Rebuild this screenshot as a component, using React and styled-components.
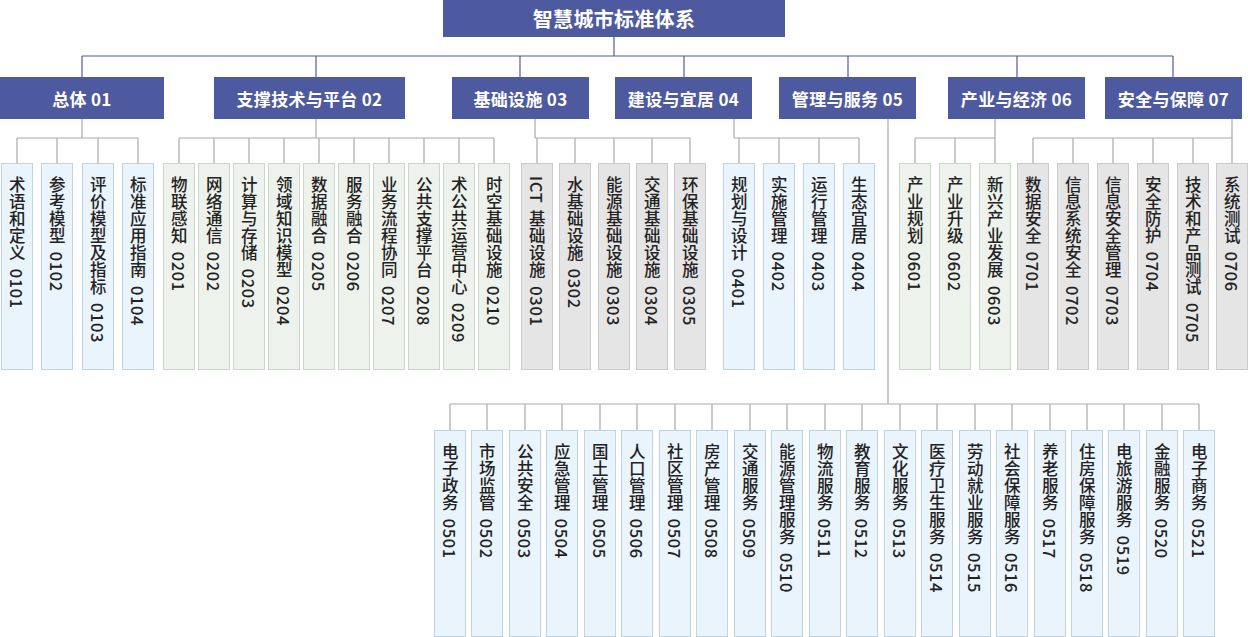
import React from "react";
import styled, { createGlobalStyle } from "styled-components";

const Global = createGlobalStyle`
  html, body { margin: 0; padding: 0; background: #fff; }
  body { font-family: "Noto Sans CJK SC", "Noto Sans", sans-serif; }
`;

const Canvas = styled.div`
  position: relative;
  width: 1248px;
  height: 637px;
  overflow: hidden;
`;

const Lines = styled.svg`
  position: absolute;
  left: 0;
  top: 0;
  width: 1248px;
  height: 637px;
`;

const Box = styled.div.attrs((p) => ({
  style: { left: p.$x, top: p.$y, width: p.$w, height: p.$h },
}))`
  position: absolute;
  background: #4e5a9f;
  color: #fff;
  display: flex;
  align-items: center;
  justify-content: center;
  font-weight: 700;
  font-size: ${(p) => (p.$title ? 20 : 17)}px;
  letter-spacing: 0.3px;
  white-space: nowrap;
`;

const fills = {
  blue: ["#eaf4fc", "#c4d2de"],
  green: ["#edf3ec", "#c9d6c8"],
  gray: ["#e5e5e5", "#cbcbcb"],
};

const Leaf = styled.div.attrs((p) => ({
  style: { left: p.$x, top: p.$y, height: p.$h },
}))`
  position: absolute;
  width: 32px;
  box-sizing: border-box;
  background: ${(p) => fills[p.$c][0]};
  border: 1px solid ${(p) => fills[p.$c][1]};
  writing-mode: vertical-rl;
  text-orientation: mixed;
  display: flex;
  align-items: center;
  padding-top: 12px;
  font-size: 16.5px;
  font-weight: 500;
  line-height: 1;
  letter-spacing: 0.6px;
  word-spacing: 3px;
  color: #222;
  white-space: nowrap;
`;

const headers = [
  { t: "总体 01", x: 0, w: 164, c: 82 },
  { t: "支撑技术与平台 02", x: 214, w: 191, c: 316 },
  { t: "基础设施 03", x: 452, w: 137, c: 520 },
  { t: "建设与宜居 04", x: 615, w: 137, c: 684 },
  { t: "管理与服务 05", x: 779, w: 137, c: 848 },
  { t: "产业与经济 06", x: 948, w: 137, c: 1017 },
  { t: "安全与保障 07", x: 1105, w: 137, c: 1173 },
];

const groups = [
  { c: "blue", drop: 82, xs: [1, 41, 82, 122], items: ["术语和定义 0101", "参考模型 0102", "评价模型及指标 0103", "标准应用指南 0104"] },
  { c: "green", drop: 316, xs: [163, 198, 233, 268, 303, 338, 373, 408, 443, 478], items: ["物联感知 0201", "网络通信 0202", "计算与存储 0203", "领域知识模型 0204", "数据融合 0205", "服务融合 0206", "业务流程协同 0207", "公共支撑平台 0208", "术公共运营中心 0209", "时空基础设施 0210"] },
  { c: "gray", drop: 535, xs: [521, 559, 598, 636, 674], items: ["ICT 基础设施 0301", "水基础设施 0302", "能源基础设施 0303", "交通基础设施 0304", "环保基础设施 0305"] },
  { c: "blue", drop: 734, xs: [723, 763, 803, 843], items: ["规划与设计 0401", "实施管理 0402", "运行管理 0403", "生态宜居 0404"] },
  { c: "green", drop: 995, xs: [899, 939, 979], items: ["产业规划 0601", "产业升级 0602", "新兴产业发展 0603"] },
  { c: "gray", drop: 1232, xs: [1017, 1057, 1097, 1137, 1177, 1216], items: ["数据安全 0701", "信息系统安全 0702", "信息安全管理 0703", "安全防护 0704", "技术和产品测试 0705", "系统测试 0706"] },
];

const g5 = ["电子政务 0501", "市场监管 0502", "公共安全 0503", "应急管理 0504", "国土管理 0505", "人口管理 0506", "社区管理 0507", "房产管理 0508", "交通服务 0509", "能源管理服务 0510", "物流服务 0511", "教育服务 0512", "文化服务 0513", "医疗卫生服务 0514", "劳动就业服务 0515", "社会保障服务 0516", "养老服务 0517", "住房保障服务 0518", "电旅游服务 0519", "金融服务 0520", "电子商务 0521"];
const g5x = g5.map((_, i) => Math.round(434 + i * 37.47));

export default function App() {
  const gray = "#a9a9a9";
  const dark = "#4e5a9f";
  return (
    <Canvas>
      <Global />
      <Lines>
        <line x1="614" y1="37" x2="614" y2="56" stroke={dark} strokeWidth="1.2" />
        <line x1="82" y1="56" x2="1173" y2="56" stroke={dark} strokeWidth="1.2" />
        {headers.map((h) => (
          <line key={h.t} x1={h.c} y1="56" x2={h.c} y2="77" stroke={dark} strokeWidth="1.2" />
        ))}
        {groups.map((g, gi) => {
          const cs = g.xs.map((x) => x + 16);
          const lo = Math.min(g.drop, ...cs);
          const hi = Math.max(g.drop, ...cs);
          return (
            <g key={gi} stroke={gray} strokeWidth="1.2">
              <line x1={g.drop} y1="119" x2={g.drop} y2="138" />
              <line x1={lo} y1="138" x2={hi} y2="138" />
              {cs.map((c) => (
                <line key={c} x1={c} y1="138" x2={c} y2="163" />
              ))}
            </g>
          );
        })}
        <g stroke={gray} strokeWidth="1.2">
          <line x1="888" y1="119" x2="888" y2="404" />
          <line x1={g5x[0] + 16} y1="404" x2={g5x[g5x.length - 1] + 16} y2="404" />
          {g5x.map((x) => (
            <line key={x} x1={x + 16} y1="404" x2={x + 16} y2="430" />
          ))}
        </g>
      </Lines>
      <Box $title $x={443} $y={0} $w={342} $h={37}>智慧城市标准体系</Box>
      {headers.map((h) => (
        <Box key={h.t} $x={h.x} $y={77} $w={h.w} $h={42}>{h.t}</Box>
      ))}
      {groups.map((g) =>
        g.items.map((t, i) => (
          <Leaf key={t} $c={g.c} $x={g.xs[i]} $y={163} $h={207}>{t}</Leaf>
        ))
      )}
      {g5.map((t, i) => (
        <Leaf key={t} $c="blue" $x={g5x[i]} $y={430} $h={207}>{t}</Leaf>
      ))}
    </Canvas>
  );
}
